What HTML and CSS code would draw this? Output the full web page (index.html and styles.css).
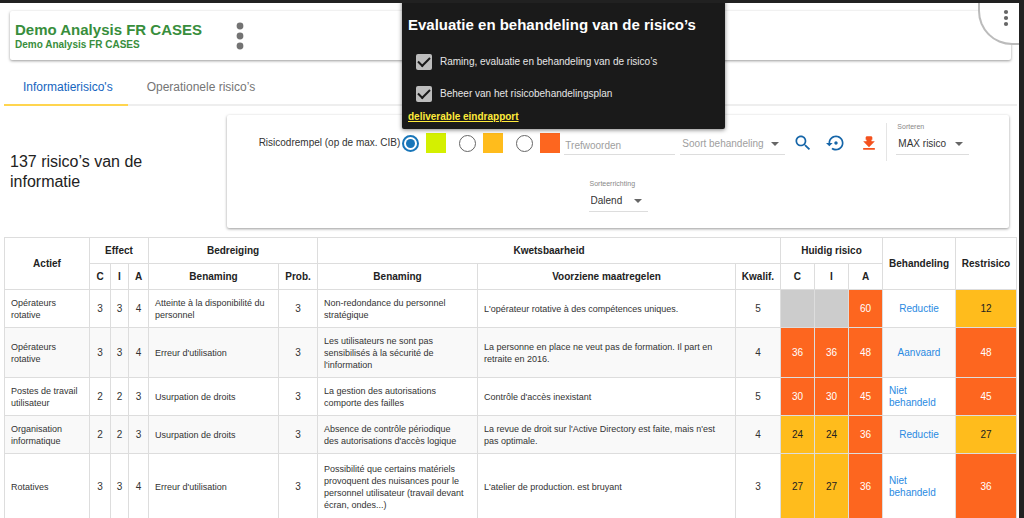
FILE: index.html
```html
<!DOCTYPE html>
<html lang="nl">
<head>
<meta charset="utf-8">
<meta name="viewport" content="width=device-width, initial-scale=1">
<title>Demo Analysis FR CASES</title>
<link rel="stylesheet" href="styles.css">
</head>
<body>
<div class="page">
  <header class="card analysis">
    <div>
      <h1 class="analysis-title">Demo Analysis FR CASES</h1>
      <p class="analysis-sub">Demo Analysis FR CASES</p>
    </div>
    <button class="icon-button" aria-label="Menu"><svg width="10" height="28" viewBox="0 0 10 28" fill="#737373"><circle cx="5" cy="4" r="3.4"/><circle cx="5" cy="14" r="3.4"/><circle cx="5" cy="24" r="3.4"/></svg></button>
  </header>
  <button class="corner" aria-label="Opties"><svg width="6" height="18" viewBox="0 0 6 18" fill="#666"><circle cx="3" cy="3" r="2.1"/><circle cx="3" cy="9" r="2.1"/><circle cx="3" cy="15" r="2.1"/></svg></button>

  <section class="steps">
    <h2 class="steps-title">Evaluatie en behandeling van de risico’s</h2>
    <label class="step"><input type="checkbox" class="check" checked>Raming, evaluatie en behandeling van de risico’s</label>
    <label class="step"><input type="checkbox" class="check" checked>Beheer van het risicobehandelingsplan</label>
    <a class="steps-link" href="#">deliverable eindrapport</a>
  </section>

  <nav class="tabs">
    <a class="tab tab-active" href="#">Informatierisico's</a>
    <a class="tab" href="#">Operationele risico’s</a>
  </nav>

  <section class="toolbar">
    <h2 class="count">137 risico’s van de informatie</h2>
    <form class="card filters">
      <div class="filter-row filter-main">
        <fieldset class="threshold">
          <span class="threshold-label">Risicodrempel (op de max. CIB)</span>
          <label class="level"><input type="radio" name="level" class="radio" aria-label="Laag" checked><span class="swatch low"></span></label>
          <label class="level"><input type="radio" name="level" class="radio" aria-label="Middel"><span class="swatch mid"></span></label>
          <label class="level"><input type="radio" name="level" class="radio" aria-label="Hoog"><span class="swatch high"></span></label>
        </fieldset>
        <input class="keywords" type="text" placeholder="Trefwoorden" aria-label="Trefwoorden">
        <span class="pick pick-kind"><select class="select muted" aria-label="Soort behandeling"><option>Soort behandeling</option></select></span>
        <div class="actions">
          <button type="button" class="icon-button" aria-label="Zoeken"><svg width="20" height="20" viewBox="0 0 24 24" fill="#1565a8"><path d="M15.500 14h-.79l-.28-.27C15.410 12.590 16 11.110 16 9.500 16 5.910 13.090 3 9.500 3S3 5.910 3 9.500 5.910 16 9.500 16c1.610 0 3.090-.59 4.230-1.570l.27.28v.79l5 4.990L20.490 19l-4.990-5zm-6 0C7.010 14 5 11.990 5 9.500S7.010 5 9.500 5 14 7.010 14 9.500 11.990 14 9.500 14z"/></svg></button>
          <button type="button" class="icon-button" aria-label="Herstellen"><svg width="20" height="20" viewBox="0 0 24 24" fill="#1565a8"><path d="M14 12c0-1.100-.9-2-2-2s-2 .9-2 2 .9 2 2 2 2-.9 2-2zm-2-9c-4.970 0-9 4.030-9 9H0l4 4 4-4H5c0-3.870 3.130-7 7-7s7 3.130 7 7-3.130 7-7 7c-1.510 0-2.910-.49-4.060-1.300l-1.420 1.440C8.040 20.300 9.940 21 12 21c4.970 0 9-4.030 9-9s-4.030-9-9-9z"/></svg></button>
          <button type="button" class="icon-button" aria-label="Downloaden"><svg width="20" height="20" viewBox="0 0 24 24" fill="#f4511e"><path d="M19 10h-4V8h1V5l-1-1H9L8 5v3h1v2H5l7 7 7-7zM5 18v2h14v-2H5z"/></svg></button>
        </div>
        <label class="field field-sort"><span class="field-label">Sorteren</span><span class="pick"><select class="select"><option>MAX risico</option></select></span></label>
      </div>
      <div class="filter-row">
        <label class="field field-dir"><span class="field-label">Sorteerrichting</span><span class="pick"><select class="select"><option>Dalend</option></select></span></label>
      </div>
    </form>
  </section>

  <table class="risks">
    <colgroup><col class="w-asset"><col class="w-c"><col class="w-ia"><col class="w-a"><col class="w-threat"><col class="w-prob"><col class="w-vuln"><col><col class="w-qual"><col class="w-risk"><col class="w-risk"><col class="w-risk"><col class="w-treat"><col class="w-rest"></colgroup>
    <thead>
      <tr><th rowspan="2">Actief</th><th colspan="3">Effect</th><th class="group" colspan="2">Bedreiging</th><th class="group" colspan="3">Kwetsbaarheid</th><th class="group" colspan="3">Huidig risico</th><th rowspan="2">Behandeling</th><th rowspan="2">Restrisico</th></tr>
      <tr><th>C</th><th>I</th><th>A</th><th class="group">Benaming</th><th>Prob.</th><th class="group">Benaming</th><th>Voorziene maatregelen</th><th>Kwalif.</th><th class="group">C</th><th>I</th><th>A</th></tr>
    </thead>
    <tbody>
      <tr><td>Opérateurs<br>rotative</td><td class="n">3</td><td class="n">3</td><td class="n">4</td><td class="group">Atteinte à la disponibilité du personnel</td><td class="n">3</td><td class="group">Non-redondance du personnel stratégique</td><td>L'opérateur rotative à des compétences uniques.</td><td class="n">5</td><td class="n none"></td><td class="n none"></td><td class="n high">60</td><td class="n"><a class="treat" href="#">Reductie</a></td><td class="n mid">12</td></tr>
      <tr><td>Opérateurs<br>rotative</td><td class="n">3</td><td class="n">3</td><td class="n">4</td><td class="group">Erreur d'utilisation</td><td class="n">3</td><td class="group">Les utilisateurs ne sont pas sensibilisés à la sécurité de<br>l'information</td><td>La personne en place ne veut pas de formation. Il part en<br>retraite en 2016.</td><td class="n">4</td><td class="n high">36</td><td class="n high">36</td><td class="n high">48</td><td class="n"><a class="treat" href="#">Aanvaard</a></td><td class="n high">48</td></tr>
      <tr><td>Postes de travail utilisateur</td><td class="n">2</td><td class="n">2</td><td class="n">3</td><td class="group">Usurpation de droits</td><td class="n">3</td><td class="group">La gestion des autorisations<br>comporte des failles</td><td>Contrôle d'accès inexistant</td><td class="n">5</td><td class="n high">30</td><td class="n high">30</td><td class="n high">45</td><td><a class="treat" href="#">Niet<br>behandeld</a></td><td class="n high">45</td></tr>
      <tr><td>Organisation informatique</td><td class="n">2</td><td class="n">2</td><td class="n">3</td><td class="group">Usurpation de droits</td><td class="n">3</td><td class="group">Absence de contrôle périodique<br>des autorisations d'accès logique</td><td>La revue de droit sur l'Active Directory est faite, mais n'est<br>pas optimale.</td><td class="n">4</td><td class="n mid">24</td><td class="n mid">24</td><td class="n high">36</td><td class="n"><a class="treat" href="#">Reductie</a></td><td class="n mid">27</td></tr>
      <tr class="tall"><td>Rotatives</td><td class="n">3</td><td class="n">3</td><td class="n">4</td><td class="group">Erreur d'utilisation</td><td class="n">3</td><td class="group">Possibilité que certains matériels<br>provoquent des nuisances pour le<br>personnel utilisateur (travail devant<br>écran, ondes...)</td><td>L'atelier de production. est bruyant</td><td class="n">3</td><td class="n mid">27</td><td class="n mid">27</td><td class="n high">36</td><td><a class="treat" href="#">Niet<br>behandeld</a></td><td class="n high">36</td></tr>
    </tbody>
  </table>
</div>
</body>
</html>
```

FILE: styles.css
```css
* { box-sizing: border-box; }
html { background: #212121; overflow: hidden; }
body {
  margin: 0;
  min-height: 100vh;
  border: solid #212121;
  border-width: 3px 5px 0 0;
  background: #fff;
  color: #333;
  font: 10px/12px "Liberation Sans", Arial, sans-serif;
}
h1, h2, p { margin: 0; }
button, input, select { font: inherit; color: inherit; }
.page { position: relative; padding: 8px 2px 0 4px; }
.card { background: #fff; border-radius: 2px; box-shadow: 0 1px 3px rgba(0, 0, 0, .4); }

.analysis { display: flex; align-items: center; gap: 33px; height: 49px; margin: 0 6px; padding: 0 5px; }
.analysis-title { color: #388e3c; font-size: 15px; line-height: 18px; }
.analysis-sub { color: #388e3c; font-weight: bold; line-height: 12px; }
.icon-button { display: flex; padding: 0; border: 0; background: none; }
.corner {
  position: absolute; top: 0; right: 0;
  width: 41px; height: 42px; padding: 6px 0 0 12px;
  display: flex; justify-content: center; align-items: flex-start;
  border: solid #bbb; border-width: 0 0 2px 2px; border-radius: 0 0 0 34px;
  background: #fff;
}

.steps {
  position: absolute; top: -3px; left: 402px; z-index: 2;
  width: 323px; padding: 13px 6px 4px;
  border-top: 3px solid #000; border-radius: 0 0 2px 2px;
  background: #1a1a1a; color: #e6e6e6;
  box-shadow: 0 1px 4px rgba(0, 0, 0, .5);
}
.steps-title { margin-bottom: 19px; color: #fff; font-size: 15px; line-height: 18px; }
.step { display: flex; align-items: center; gap: 8px; height: 17px; margin: 0 0 15px 8px; }
.check { appearance: none; display: grid; place-items: center; width: 16px; height: 16px; margin: 0; border-radius: 2px; background: #bdbdbd; }
.check::before { content: ""; width: 10px; height: 5px; margin-bottom: 3px; border: solid #1a1a1a; border-width: 0 0 2px 2px; transform: rotate(-45deg); }
.steps-link { display: block; margin-top: -8px; color: #ffeb3b; font-weight: bold; line-height: 16px; }

.tabs { display: flex; height: 46px; border-bottom: 2px solid #eee; }
.tab { padding: 20px 15px 0 19px; height: 46px; color: #757575; font-size: 12px; line-height: 14px; text-decoration: none; }
.tab-active { border-bottom: 2px solid #ffd54f; color: #1565c0; }

.toolbar { display: flex; padding: 9px 8px 0 6px; }
.count { flex: 0 0 217px; padding: 37px 60px 0 0; color: #222; font-size: 16px; font-weight: normal; line-height: 20px; }
.filters { flex: 1; height: 113px; padding-top: 8px; }
.filter-row { display: flex; justify-content: center; height: 57px; }
.filter-main { padding-right: 8px; }
.threshold { display: flex; align-items: center; height: 40px; margin: 0; padding: 0; border: 0; }
.level { display: flex; align-items: center; gap: 7px; margin-right: 13px; }
.level:last-child { margin-right: 4px; }
.threshold-label { margin-right: 2px; }
.radio { appearance: none; display: grid; place-items: center; width: 17px; height: 17px; margin: 0; border: 1px solid #666; border-radius: 50%; }
.radio:checked { border: 2px solid #1976b9; }
.radio:checked::before { content: ""; width: 9px; height: 9px; border-radius: 50%; background: #1976b9; }
.swatch { width: 20px; height: 20px; }
.keywords { width: 111px; height: 18px; margin-top: 14px; padding: 0 1px; border: 0; border-bottom: 1px solid #ddd; background: none; }
.keywords::placeholder { color: #9e9e9e; opacity: 1; }
.pick { position: relative; display: block; height: 22px; border-bottom: 1px solid #ddd; }
.pick::after { content: ""; position: absolute; right: 6px; top: 9px; border: solid transparent; border-width: 4px 4px 0; border-top-color: #666; pointer-events: none; }
.pick-kind { width: 105px; margin: 10px 0 0 5px; }
.select { appearance: none; width: 100%; height: 21px; padding: 0 2px; border: 0; background: none; }
.muted { color: #9e9e9e; }
.actions { display: flex; gap: 13px; padding: 10px 7px 0 8px; }
.field { display: flex; flex-direction: column; }
.field-label { color: #888; font-size: 7px; line-height: 8px; margin-bottom: 2px; padding: 0 1px; }
.field-sort { width: 83px; height: 38px; padding: 0 0 0 9px; border-left: 1px solid #e5e5e5; }
.field-dir { width: 59px; }

.risks { width: 100%; margin-top: 9px; border-collapse: collapse; table-layout: fixed; border: 1px solid #ccc; }
.risks th { height: 26px; padding: 0; border: 1px solid #ddd; color: #222; line-height: 12px; }
.risks td { padding: 7px 4px 6px 6px; border: 1px solid #ddd; font-size: 9px; text-align: left; }
.risks .group { border-left: 1px solid #bbb; }
.risks .n { padding: 0; font-size: 10px; text-align: center; }
.risks tbody tr:nth-child(even) { background: #f9f9f9; }
.risks .tall { height: 66px; }
.w-asset { width: 85px; }
.w-c { width: 21px; }
.w-ia { width: 18px; }
.w-a { width: 20px; }
.w-threat { width: 130px; }
.w-prob { width: 39px; }
.w-vuln { width: 160px; }
.w-qual { width: 45px; }
.w-risk { width: 34px; }
.w-treat { width: 73px; }
.w-rest { width: 61px; }
.treat { color: #2a8ae2; font-size: 10px; text-decoration: none; }
.low { background: #d4f000; }
.risks .mid, .mid { background: #ffbc1c; color: #222; }
.high { background: #fd661f; color: #fff; }
.none { background: #ccc; }
```
